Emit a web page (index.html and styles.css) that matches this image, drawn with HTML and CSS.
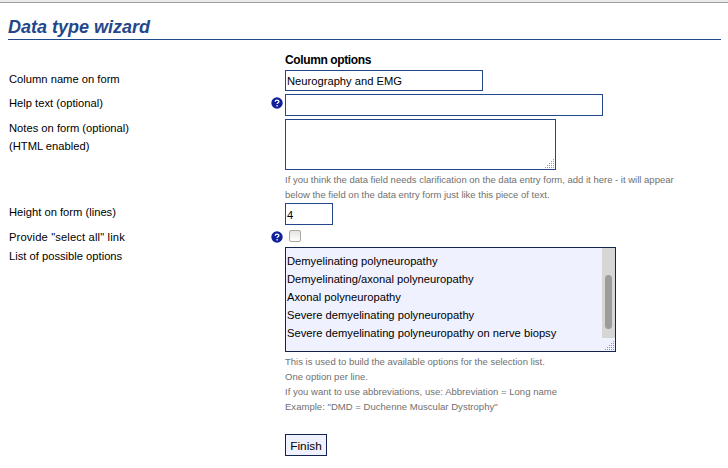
FILE: index.html
```html
<!DOCTYPE html>
<html lang="en">
<head>
<meta charset="utf-8">
<title>Data type wizard</title>
<link rel="stylesheet" href="styles.css">
</head>
<body>
<div class="topbar"></div>
<main>
<h1><span>Data type wizard</span></h1>
<form class="form">
  <div class="row row-head"><div></div><div></div><h2>Column options</h2></div>
  <div class="row row-name"><div class="label">Column name on form</div><div></div><div class="field name"><span>Neurography and EMG</span></div></div>
  <div class="row row-help"><div class="label">Help text (optional)</div>
    <svg class="icon" viewBox="0 0 12 12"><circle cx="6" cy="6" r="5.7"/><path d="M4.2 4.7C4.2 2.5 7.9 2.5 7.9 4.6C7.9 5.8 6.1 5.8 6.1 7.1M6.1 8.1V9.5"/></svg>
    <div class="field help"></div></div>
  <div class="row row-notes"><div class="label">Notes on form (optional)<br>(HTML enabled)</div><div></div>
    <div><div class="field notes"><svg class="grip" viewBox="0 0 10 10"><path d="M8 0h1v1h-1zM6 2h1v1h-1zM8 2h1v1h-1zM4 4h1v1h-1zM6 4h1v1h-1zM8 4h1v1h-1zM2 6h1v1h-1zM4 6h1v1h-1zM6 6h1v1h-1zM8 6h1v1h-1zM0 8h1v1h-1zM2 8h1v1h-1zM4 8h1v1h-1zM6 8h1v1h-1zM8 8h1v1h-1z"/></svg></div>
    <p class="hint"><span>If you think the data field needs clarification on the data entry form, add it here - it will appear</span><br><span>below the field on the data entry form just like this piece of text.</span></p></div></div>
  <div class="row row-height"><div class="label">Height on form (lines)</div><div></div><div class="field height"><span>4</span></div></div>
  <div class="row row-all"><div class="label label-all">Provide "select all" link</div>
    <svg class="icon" viewBox="0 0 12 12"><circle cx="6" cy="6" r="5.7"/><path d="M4.2 4.7C4.2 2.5 7.9 2.5 7.9 4.6C7.9 5.8 6.1 5.8 6.1 7.1M6.1 8.1V9.5"/></svg>
    <div class="check"></div></div>
  <div class="row row-list"><div class="label">List of possible options</div><div></div>
    <div><div class="field options"><div class="lines"><span>Demyelinating polyneuropathy</span><br><span>Demyelinating/axonal polyneuropathy</span><br><span>Axonal polyneuropathy</span><br><span>Severe demyelinating polyneuropathy</span><br><span>Severe demyelinating polyneuropathy on nerve biopsy</span></div><div class="track"><div class="thumb"></div></div>
    <svg class="grip" viewBox="0 0 10 10"><path d="M8 0h1v1h-1zM6 2h1v1h-1zM8 2h1v1h-1zM4 4h1v1h-1zM6 4h1v1h-1zM8 4h1v1h-1zM2 6h1v1h-1zM4 6h1v1h-1zM6 6h1v1h-1zM8 6h1v1h-1zM0 8h1v1h-1zM2 8h1v1h-1zM4 8h1v1h-1zM6 8h1v1h-1zM8 8h1v1h-1z"/></svg></div>
    <p class="hint"><span>This is used to build the available options for the selection list.</span><br><span>One option per line.</span><br><span class="wide">If you want to use abbreviations, use: Abbreviation = Long name</span><br><span class="wide">Example: "DMD = Duchenne Muscular Dystrophy"</span></p>
    <button type="button" class="finish">Finish</button></div></div>
</form>
</main>
</body>
</html>
```
FILE: styles.css
```css
* { box-sizing: border-box; }
body {
  margin: 0;
  height: 468px;
  overflow: hidden;
  background: #fff;
  color: #000;
  font: 11.2px/18px "Liberation Sans", Arial, sans-serif;
}
.topbar { height: 3px; background: #ebebeb; border-bottom: 1px solid #a0a0a0; }
main { padding: 0 7px 0 8px; }
h1 {
  margin: 0;
  height: 37px;
  padding-top: 13px;
  border-bottom: 1px solid #204a87;
  color: #24468a;
  font: italic bold 18px/22px "Liberation Sans", Arial, sans-serif;
}
h2 { margin: 0; font-size: 12px; line-height: 18px; letter-spacing: -0.38px; }
.form { padding-top: 11px; }
.row { display: grid; grid-template-columns: 263px 14px 1fr; align-items: start; white-space: nowrap; }
.label { padding-left: 1px; }
.label-all { letter-spacing: 0.14px; }
.row-head { height: 19px; }
.row-name { height: 24px; }
.row-help { height: 25px; }
.row-notes { height: 84px; }
.row-height { height: 25px; }
.row-all { height: 19px; }
.field { border: 1px solid #24468a; background: #fff; padding-left: 1px; position: relative; }
.name { width: 198px; height: 21px; line-height: 21px; }
.help { width: 318px; height: 22px; }
.notes { width: 271px; height: 51px; }
.height { width: 48px; height: 22px; line-height: 23px; }
.icon { width: 12px; height: 12px; margin: 3px 0 0 -0.5px; }
.icon circle { fill: #10209a; }
.icon path { fill: none; stroke: #fff; stroke-width: 1.3; }
.check {
  width: 12px;
  height: 12px;
  margin: 2px 0 0 4px;
  border: 1px solid #a8a8a0;
  border-radius: 2px;
  background: linear-gradient(#e4e4e2, #fff);
}
.hint { margin: 0; padding-top: 2px; color: #707070; font-size: 9.5px; line-height: 15px; }
.hint .wide { letter-spacing: 0.03px; }
.options { display: flex; width: 331px; height: 105px; border-color: #14234b; background: #eff1ff; }
.lines { flex: 1; padding-top: 4px; }
.track { width: 13px; height: 90px; padding: 27px 3px 0; background: #d6d6d6; }
.thumb { width: 7px; height: 54px; border-radius: 4px; background: #9c9c9c; }
.grip { position: absolute; right: 0; bottom: 0; width: 10px; height: 10px; fill: #999; }
.finish {
  display: block;
  width: 42px;
  height: 22px;
  margin-top: 20px;
  padding: 2px 0 0;
  border: 1px solid #14234b;
  background: #eff1ff;
  color: #000;
  font: 11.8px/18px "Liberation Sans", Arial, sans-serif;
}
```
